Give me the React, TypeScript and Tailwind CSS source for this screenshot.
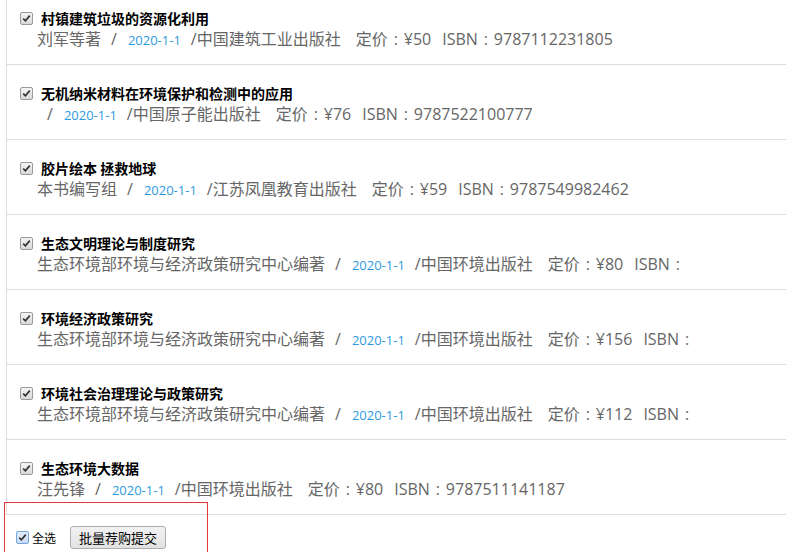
const BOOKS = [
  { title: '村镇建筑垃圾的资源化利用', author: '刘军等著', date: '2020-1-1', publisher: '中国建筑工业出版社', price: '50', isbn: '9787112231805' },
  { title: '无机纳米材料在环境保护和检测中的应用', author: '', date: '2020-1-1', publisher: '中国原子能出版社', price: '76', isbn: '9787522100777' },
  { title: '胶片绘本 拯救地球', author: '本书编写组', date: '2020-1-1', publisher: '江苏凤凰教育出版社', price: '59', isbn: '9787549982462' },
  { title: '生态文明理论与制度研究', author: '生态环境部环境与经济政策研究中心编著', date: '2020-1-1', publisher: '中国环境出版社', price: '80', isbn: '' },
  { title: '环境经济政策研究', author: '生态环境部环境与经济政策研究中心编著', date: '2020-1-1', publisher: '中国环境出版社', price: '156', isbn: '' },
  { title: '环境社会治理理论与政策研究', author: '生态环境部环境与经济政策研究中心编著', date: '2020-1-1', publisher: '中国环境出版社', price: '112', isbn: '' },
  { title: '生态环境大数据', author: '汪先锋', date: '2020-1-1', publisher: '中国环境出版社', price: '80', isbn: '9787511141187' },
]

function CheckBox({ focused = false }: { focused?: boolean }) {
  return (
    <span
      className={`flex h-[13px] w-[13px] shrink-0 items-center justify-center rounded-[2px] border ${
        focused
          ? 'border-[#6fa7e0] bg-gradient-to-b from-[#e4eefa] to-[#c9dbf2]'
          : 'border-[#9a9a9a] bg-gradient-to-b from-[#f4f4f4] to-[#d9d9d9]'
      }`}
    >
      <svg width="9" height="9" viewBox="0 0 9 9">
        <path d="M1.2 4.6 L3.4 6.8 L7.8 1.6" fill="none" stroke="#333" strokeWidth="1.7" />
      </svg>
    </span>
  )
}

// full-width colon drawn centred, as the original font does
function Colon() {
  return <span className="inline-block w-[16px] text-center">:</span>
}

export default function App() {
  return (
    <div className="relative h-[552px] w-[786px] overflow-hidden bg-white font-['Noto_Sans_CJK_SC','Microsoft_YaHei',sans-serif]">
      {/* list, scrolled a little */}
      <div className="h-[516px] overflow-hidden">
        <div className="-mt-[10px] ml-[6px] border-l border-[#dddddd]">
          {BOOKS.map((b, i) => (
            <div key={i} className="h-[75px] border-b border-[#dddddd] pl-[13px] pt-[18px]">
              <div className="flex h-[20px] items-center gap-[8px]">
                <CheckBox />
                <span className="text-[14px] font-bold leading-[20px] text-black">{b.title}</span>
              </div>
              <div className="flex h-[23px] items-baseline whitespace-pre pl-[17px] font-['Open_Sans','Noto_Sans_CJK_SC',sans-serif] text-[16px] leading-[23px] text-[#666666]">
                {b.author && <span>{b.author}</span>}
                <span className="ml-[10px] mr-[11px]">/</span>
                <span className="text-[13px] text-[#2d9ae0]">{b.date}</span>
                <span className="ml-[10px]">/{b.publisher}</span>
                <span className="ml-[15px]">
                  定价<Colon />¥{b.price}
                </span>
                <span className="ml-[11px]">
                  ISBN<Colon />{b.isbn}
                </span>
              </div>
            </div>
          ))}
        </div>
      </div>

      {/* footer */}
      <div className="flex items-center pl-[16px] pt-[10px]">
        <CheckBox focused />
        <span className="ml-[3px] text-[12px] text-black">全选</span>
        <button className="ml-[14px] flex h-[23px] w-[96px] items-center justify-center rounded-[3px] border border-[#adadad] bg-gradient-to-b from-[#f2f2f2] to-[#e2e2e2] text-[13px] text-black">
          批量荐购提交
        </button>
      </div>

      {/* annotation box */}
      <div className="absolute left-[4px] top-[502px] h-[60px] w-[204px] border border-[#e23a3a]" />
    </div>
  )
}
